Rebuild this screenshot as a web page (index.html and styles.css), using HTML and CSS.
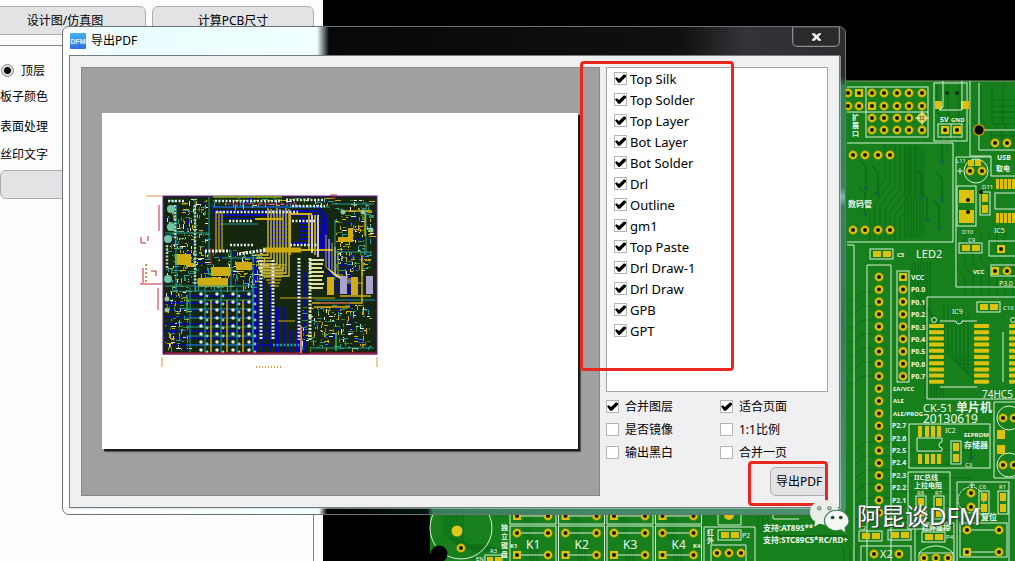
FILE: index.html
```html
<!DOCTYPE html>
<html lang="zh-CN">
<head>
<meta charset="utf-8">
<title>导出PDF</title>
<link rel="stylesheet" href="styles.css">
</head>
<body>
<main class="app">
  <aside class="sidebar">
    <div class="tabs">
      <button class="btn tab tab-first" type="button">设计图/仿真图</button>
      <button class="btn tab" type="button">计算PCB尺寸</button>
    </div>
    <div class="panel">
      <label class="side-row radio-row"><input type="radio" class="radio" name="side" checked>顶层</label>
      <div class="side-row">板子颜色</div>
      <div class="side-row surface">表面处理</div>
      <div class="side-row">丝印文字</div>
      <button class="btn wide" type="button" aria-label="丝印文字"></button>
    </div>
  </aside>
  <section class="viewer">
    <svg class="board" id="board" viewBox="323 0 692 561" preserveAspectRatio="xMinYMin slice" role="img" aria-label="PCB"></svg>
  </section>
</main>

<section class="dialog" role="dialog" aria-labelledby="dialog-title">
  <header class="titlebar">
    <svg class="logo" viewBox="0 0 16 16" aria-hidden="true">
      <defs><linearGradient id="lg" x2="0" y2="1"><stop stop-color="#43b3ef"/><stop offset="1" stop-color="#2f6fe4"/></linearGradient></defs>
      <rect width="16" height="16" rx="1" fill="url(#lg)"/>
      <text x="8" y="11" text-anchor="middle" class="logo-text">DFM</text>
    </svg>
    <h1 class="title" id="dialog-title">导出PDF</h1>
    <button class="close" type="button" aria-label="关闭"><svg viewBox="0 0 12 10" class="close-icon"><path d="M1 1h3l2 2.2L8 1h3v1L8 5l3 3v1H8L6 6.8 4 9H1V8l3-3-3-3z"/></svg></button>
  </header>
  <div class="content">
    <div class="preview">
      <div class="page">
        <svg class="drawing" id="drawing" viewBox="135 180 260 200" role="img" aria-label="PDF"></svg>
      </div>
    </div>
    <form class="options">
      <div class="layers">
        <label class="layer"><input type="checkbox" class="check" checked>Top Silk</label>
        <label class="layer"><input type="checkbox" class="check" checked>Top Solder</label>
        <label class="layer"><input type="checkbox" class="check" checked>Top Layer</label>
        <label class="layer"><input type="checkbox" class="check" checked>Bot Layer</label>
        <label class="layer"><input type="checkbox" class="check" checked>Bot Solder</label>
        <label class="layer"><input type="checkbox" class="check" checked>Drl</label>
        <label class="layer"><input type="checkbox" class="check" checked>Outline</label>
        <label class="layer"><input type="checkbox" class="check" checked>gm1</label>
        <label class="layer"><input type="checkbox" class="check" checked>Top Paste</label>
        <label class="layer"><input type="checkbox" class="check" checked>Drl Draw-1</label>
        <label class="layer"><input type="checkbox" class="check" checked>Drl Draw</label>
        <label class="layer"><input type="checkbox" class="check" checked>GPB</label>
        <label class="layer"><input type="checkbox" class="check" checked>GPT</label>
      </div>
      <div class="settings">
        <label class="setting"><input type="checkbox" class="check" checked>合并图层</label>
        <label class="setting"><input type="checkbox" class="check" checked>适合页面</label>
        <label class="setting"><input type="checkbox" class="check">是否镜像</label>
        <label class="setting"><input type="checkbox" class="check">1:1比例</label>
        <label class="setting"><input type="checkbox" class="check">输出黑白</label>
        <label class="setting"><input type="checkbox" class="check">合并一页</label>
      </div>
      <button class="btn export" type="button">导出PDF</button>
    </form>
  </div>
  <div class="mark mark-layers"></div>
  <div class="mark mark-export"></div>
</section>

<div class="watermark">
  <svg class="bubbles" viewBox="0 0 40 34" aria-hidden="true">
    <path d="M15 1C7 1 1 6 1 13c0 4 2 7 5 9l-1 5 5-3 5 1c8 0 14-5 14-12S23 1 15 1z" fill="#e9eeea"/>
    <circle cx="10" cy="9" r="1.6" fill="#d5eadb" stroke="#5c7567"/><circle cx="20" cy="9" r="1.6" fill="#d5eadb" stroke="#5c7567"/>
    <path d="M27 11c-7 0-12 5-12 10s5 10 12 10l4-1 5 3-1-5c3-2 4-4 4-7 0-5-5-10-12-10z" fill="#f6f8f6" stroke="#3c7c4c"/>
    <circle cx="23" cy="18" r="1.8" fill="#234f2d"/><circle cx="31" cy="18" r="1.8" fill="#234f2d"/>
  </svg>
  <span>阿昆谈DFM</span>
</div>
<script src="script.js"></script>
</body>
</html>
```
FILE: styles.css
```css
* { box-sizing: border-box; }

body {
  margin: 0;
  min-height: 100vh;
  overflow: hidden;
  font-family: "Noto Sans", "Noto Sans CJK SC", sans-serif;
  font-size: 12px;
  line-height: 16px;
  color: #000;
  background: #000;
}

button, input { font: inherit; color: inherit; }

.app { display: flex; height: 100vh; }

.sidebar {
  flex: 0 0 323px;
  display: flex;
  flex-direction: column;
  padding-top: 6px;
  background: #fdfdfe;
  overflow: hidden;
}

.tabs { display: flex; gap: 6px; margin: 0 9px 10px -16px; }

.btn {
  height: 29px;
  padding: 0;
  border: 1px solid #adadaf;
  border-radius: 6px;
  background: #e3e3e5;
}

.tab { flex: 1; }

.panel {
  flex: 1;
  display: flex;
  flex-direction: column;
  margin-right: 9px;
  padding-top: 12px;
  border: 1px solid #808488;
  border-width: 1px 1px 0 0;
}

.side-row { height: 27px; line-height: 28px; }
.surface { height: 31px; line-height: 34px; }
.radio-row { display: flex; align-items: center; gap: 7px; height: 25px; }
.side-row:nth-child(4) { height: 29px; line-height: 28px; }

.radio {
  appearance: none;
  width: 13px;
  height: 13px;
  margin: 0 0 0 1px;
  border: 1px solid #85858a;
  border-radius: 50%;
  background: radial-gradient(circle, #000 3px, #e0e0e2 4px);
}

.wide { width: 290px; }

.viewer { flex: 1; min-width: 0; background: #000; }
.board { display: block; width: 100%; height: 100%; }
.board text { font-family: "Noto Sans", "Noto Sans CJK SC", sans-serif; fill: #eef8ee; }

.dialog {
  position: absolute;
  left: 62px;
  right: 169px;
  top: 26px;
  padding: 0 5px 6px 6px;
  border: 1px solid #6c7378;
  border-radius: 7px;
  background:
    linear-gradient(to right, #fff 0, #f3ffff 256px, #000 264px, #06140d 364px, #397e5b 370px, #4b9573 100%) bottom / 100% 7px no-repeat,
    linear-gradient(to bottom, #303033 0, #2b2b2e 50px, #36815a 60px, #3b805e 160px, #7fb7b2 170px, #3b8060 180px, #39785a 300px, #4b9573 100%) right / 7px 100% no-repeat,
    linear-gradient(to right, #fff 0, #e9feff 60px, #f1ffff 254px, #08080a 266px, #101012 620px, #343438 680px, #2d2d30 100%);
}

.titlebar { display: flex; align-items: center; gap: 5px; height: 28px; padding-left: 1px; }
.logo { width: 16px; height: 16px; }
.logo-text { font: bold 7px "Liberation Sans", sans-serif; fill: #e6f5ff; }
.title { flex: 1; margin: 0; font-size: 12px; font-weight: 400; }

.close {
  align-self: flex-start;
  display: grid;
  place-items: center;
  width: 48px;
  height: 20px;
  padding: 0;
  border: 1px solid #8a8a8e;
  border-top: 0;
  border-radius: 0 0 5px 5px;
  background: #2a2a2d;
  box-shadow: inset 0 0 0 1px #47474b;
}

.close-icon { width: 11px; height: 10px; fill: #f5f5f5; }

.content {
  display: grid;
  grid-template-columns: 1fr 222px;
  gap: 6px;
  padding: 11px;
  border: 1px solid #777a7e;
  background: #f0f0f2;
  box-shadow: 1px 1px 0 rgba(190, 215, 205, 0.6);
}

.preview {
  display: flex;
  padding: 45px 21px 46px 20px;
  border: 1px solid #88878c;
  background: #a09fa2;
}

.page {
  flex: 1;
  padding: 67px 33px;
  background: #fff;
  box-shadow: 2px 2px 0 #1c1a1c, 3px 3px 1px #5a585b;
}

.drawing { display: block; width: 260px; height: 200px; }

.options { display: flex; flex-direction: column; }

.layers {
  min-height: 325px;
  padding: 0 7px;
  border: 1px solid #a4a4a8;
  background: #fff;
  font-size: 13px;
}

.layer { display: flex; align-items: center; gap: 3px; height: 21px; }

.settings {
  display: grid;
  grid-template-columns: 114px 1fr;
  grid-auto-rows: 23px;
  padding: 3px 0;
}

.setting { display: flex; align-items: center; gap: 6px; }

.check {
  appearance: none;
  flex: none;
  width: 13px;
  height: 13px;
  margin: 0;
  border: 1px solid #b4b4b6;
  background: #fff;
}

.check:checked::before {
  content: "";
  display: block;
  width: 11px;
  height: 11px;
  background: #000;
  clip-path: polygon(0 48%, 16% 38%, 36% 54%, 82% 12%, 100% 20%, 100% 34%, 46% 88%, 28% 88%);
}

.export { align-self: flex-end; width: 58px; }

.mark { position: absolute; border: 3px solid #e8281e; border-radius: 4px; pointer-events: none; }
.mark-layers { top: 34px; right: 111px; width: 154px; height: 310px; }
.mark-export { top: 434px; right: 17px; width: 80px; height: 45px; }

.watermark {
  position: absolute;
  left: 809px;
  top: 498px;
  display: flex;
  align-items: center;
  gap: 7px;
  font-size: 24px;
  line-height: 36px;
  color: #fff;
  text-shadow: 1px 1px 1px #333, -1px 0 1px #456;
  white-space: nowrap;
}

.bubbles { width: 41px; height: 35px; }
```
FILE: script.js
```js
const NS = 'http://www.w3.org/2000/svg';

function pen(svg) {
  const add = (tag, attrs, text) => {
    const el = document.createElementNS(NS, tag);
    for (const key in attrs) el.setAttribute(key, attrs[key]);
    if (text) el.textContent = text;
    svg.appendChild(el);
  };
  return {
    add,
    path: (d, stroke, width = 1, extra = {}) => add('path', { d, stroke, 'stroke-width': width, fill: 'none', ...extra }),
    rect: (x, y, width, height, fill, extra = {}) => add('rect', { x, y, width, height, fill, ...extra }),
    circle: (cx, cy, r, fill, extra = {}) => add('circle', { cx, cy, r, fill, ...extra })
  };
}

function drawBoard() {
  const p = pen(document.getElementById('board'));
  const W = '#d9f0d9', Y = '#dcc20e', T = '#0b6a14';
  const box = (x, y, x2, y2) => p.rect(x, y, x2 - x, y2 - y, 'none', { stroke: W });
  const line = d => p.path(d, W);
  const pad = (x, y, square) => {
    if (square) p.rect(x - 4, y - 4, 8, 8, Y);
    else p.circle(x, y, 4.3, Y, { stroke: '#a58f10', 'stroke-width': .6 });
    p.circle(x, y, 2, '#101505');
  };
  const smd = (x, y, w, h) => p.rect(x, y, w, h, Y);
  const text = (x, y, s, size = 7, bold) => p.add('text', { x, y, 'font-size': size, 'font-weight': bold ? 700 : 400 }, s);
  const cap = (x, y) => { box(x, y, x + 23, y + 10); smd(x + 3, y + 2, 8, 6); smd(x + 13, y + 2, 8, 6); };
  const vcap = (x, y) => { box(x, y, x + 10, y + 23); smd(x + 2, y + 2, 6, 8); smd(x + 2, y + 13, 6, 8); };

  p.rect(430, 81, 600, 480, '#17801c');
  p.path('M430 81H1015', '#7f9b70');

  // copper traces
  for (let i = 0; i < 7; i++) {
    p.path(`M${885 + i * 5} 144V${180 + i * 3}L${870 + i * 5} ${200 + i * 3}V240`, T);
    p.path(`M${905 + i * 3} 146V238`, T);
    p.path(`M${848} ${300 + i * 14}h6l8 -8h12`, T);
    p.path(`M${912 + i * 3} 262V${290 + i * 4}L${925 + i * 3} ${305 + i * 4}V400`, T);
    p.path(`M${944 + i * 4} ${303 + i * 2}V${350 + i * 4}l10 10H975`, T);
    p.path(`M856 ${450 + i * 14}l10 -8h26l10 8h70`, T);
    p.path(`M${445 + i * 3} 515V${535 + i}l12 10h30`, T);
    p.path(`M${937 + i * 11} 85V${112 + i * 2}l10 10V150`, T);
    p.path(`M993 ${100 + i * 6}h25`, T);
    p.path(`M${957 + i * 8} 232V${270 - i * 3}l8 8V296`, T);
  }
  for (let i = 0; i < 4; i++) {
    for (let j = 0; j < 3; j++) p.path(`M${525 + i * 48 + j * 3} 516v20l6 8v17`, T);
    p.path(`M${758 + i * 5} 516v12l8 8h70l${8 + i} 12v20`, T);
  }
  [[922, 198], [942, 162], [942, 200], [866, 188], [878, 194], [927, 220], [865, 215], [971, 458], [939, 228]].forEach(([x, y]) => {
    p.path(`M${x} ${y}v-22l-6 -6`, T, 1.5); p.circle(x, y, 2.3, '#126840');
  });

  // expansion header
  [93, 106, 118, 130].forEach((y, r) => {
    [848, 859, 872, 884, 897, 909, 922].forEach((x, c) => {
      if (c > 1 || r < 2) pad(x, y, (r === 0 && c === 1) || (r === 1 && c === 2));
    });
  });
  line('M847 87H866M847 112H928'); box(866, 87, 928, 137);
  ['扩', '展', '口'].forEach((s, i) => text(852, 120 + i * 8, s, 7, 1));
  p.circle(922, 118, 4.5, 'none', { stroke: '#ffeebb' });
  p.path('M915 118h14M922 111v14', '#ffeebb');
  box(934, 83, 967, 141);
  smd(935, 101, 7, 8); smd(961, 101, 8, 8);
  line('M943 81V107l-4 3h23V107V81');
  p.circle(947, 93, 2, '#142a0b'); p.circle(957, 93, 2, '#142a0b');
  text(940, 122, '5V', 7, 1); text(951, 122, 'GND', 6, 1);
  box(938, 124, 962, 137); pad(945, 130, 1); pad(957, 130, 1); line('M951 124v13');
  line('M970 81V156H991V176H1015M979 83V150H1015M984 130H1015');
  p.circle(979, 130, 6, '#b8960c'); p.circle(979, 130, 4.5, '#050505');
  pad(995, 143); pad(1007, 143);
  text(997, 160, 'USB', 7, 1); text(996, 171, '取电', 7, 1);

  // digital tube
  line('M847 143H953V242H847');
  [853, 865, 878, 890].forEach(x => { pad(x, 155); pad(x, 230); });
  text(848, 207, '数码管', 8, 1);

  line('M991 157H956V287H1015');
  p.circle(976, 171, 12, 'none', { stroke: W });
  smd(968, 160, 6, 6); smd(975, 160, 6, 6); pad(970, 171); pad(982, 171);
  line('M957 171h6M960 168v6');
  text(956, 163, 'L11', 6);
  box(957, 186, 976, 226); smd(959, 190, 15, 13); smd(959, 210, 15, 13);
  p.circle(968, 200, 2, '#111'); p.circle(968, 212, 2, '#111');
  vcap(980, 192); p.circle(981, 192, 2, '#111');
  text(982, 189, 'D11', 6); text(962, 234, 'D10', 6); text(968, 242, 'C9', 6);
  for (let i = 0; i < 6; i++) { smd(996 + i * 4, 179, 3, 10); smd(996 + i * 4, 213, 3, 10); }
  box(995, 193, 1020, 209); text(994, 233, 'IC5', 7);
  cap(959, 243); box(989, 241, 1020, 256); pad(1001, 249, 1);
  text(973, 274, 'VCC', 6, 1); box(991, 265, 1020, 276); pad(995, 271, 1); pad(1007, 271);
  text(999, 286, 'P3.0', 7);

  // microcontroller socket
  line('M847 245H854V561M867 561V265H891V561');
  for (let i = 0; i < 20; i++) pad(879, 277 + i * 12.4);
  cap(870, 249); text(897, 257, 'C5', 6, 1); text(916, 258, 'LED2', 11);
  box(897, 271, 909, 382);
  ['VCC', 'P0.0', 'P0.1', 'P0.2', 'P0.3', 'P0.4', 'P0.5', 'P0.6', 'P0.7'].forEach((s, i) => {
    pad(903, 277 + i * 12.4, !i); text(911, 280 + i * 12.4, s, 7, 1);
  });
  ['EA/VCC', 'ALE', 'ALE/PROG', 'P2.7', 'P2.6', 'P2.5', 'P2.4', 'P2.3', 'P2.2', 'P2.1'].forEach((s, i) =>
    text(i < 3 ? 893 : 892, 391 + i * 12.4, s, i < 3 ? 6 : 7, 1));

  // latch
  line('M1015 297H927V399H1015'); text(952, 314, 'IC9', 7); cap(977, 302); text(1003, 310, 'C10', 6);
  for (let i = 0; i < 10; i++) [929, 974, 1009].forEach(x => p.rect(x, 324 + i * 6.2, 15, 4, Y, { rx: 1 }));
  p.circle(934, 320, 2.5, 'none', { stroke: W }); p.circle(1013, 320, 2.5, 'none', { stroke: W });
  line('M940 321h16a3 3 0 0 0 6 0h15M940 387h37M1003 332v50');
  text(982, 398, '74HC5', 10); text(923, 412, 'CK-51', 11); text(956, 412, '单片机', 12, 1); text(923, 423, '20130619', 12);

  // eeprom
  box(909, 424, 990, 468);
  [918, 925, 931, 937].forEach(x => { smd(x, 426, 4, 11); smd(x, 454, 4, 10); });
  line('M942 438H917V451H942V448a3 3 0 0 1 0-6z');
  text(945, 433, 'IC2', 7); text(964, 437, 'EEPROM', 6, 1); text(964, 448, '存储器', 8, 1); text(965, 467, 'C3', 6);
  vcap(951, 441);
  line('M1015 402H994V478H1015');
  [418, 465].forEach(y => { p.circle(1009, y, 12, 'none', { stroke: W }); pad(1003, y); pad(1014, y); });
  smd(997, 430, 8, 9); smd(997, 445, 8, 9);
  box(908, 472, 950, 529); text(914, 480, 'IIC总线', 7, 1); text(914, 488, '上拉电阻', 7, 1);
  text(917, 495, 'R8', 6); text(935, 495, 'R7', 6); vcap(916, 496); vcap(934, 496);

  // reset
  line('M1009 561V482H957V561');
  p.circle(971, 500, 13, 'none', { stroke: W, 'stroke-dasharray': '3 1' });
  pad(971, 493); pad(971, 507); vcap(979, 491); vcap(998, 491);
  line('M969 485h6M972 482v6'); text(979, 489, 'C6', 6); text(999, 489, 'R1', 6); text(981, 520, '复位', 8, 1);
  box(960, 523, 1007, 557); line('M967 530h32M967 552h32');
  pad(967, 530); pad(999, 530); pad(967, 552, 1); pad(999, 552);
  cap(859, 531); cap(888, 530); text(859, 530, 'C2', 6);
  box(861, 546, 911, 566); pad(874, 554); pad(899, 554); text(880, 558, 'X2', 11);
  line('M915 561V523H954V561M919 561V553H953V561M919 553a20 15 0 0 1 34 0');
  cap(922, 532); text(946, 539, 'P4', 6); text(922, 530, '红外遥控', 7, 1);
  pad(924, 558); pad(936, 558); pad(948, 558);

  // keypad
  p.circle(461, 528, 31, 'none', { stroke: W });
  p.circle(457, 531, 5.5, '#e0c720'); pad(461, 548); p.circle(439, 554, 8.5, '#000'); p.rect(430, 554, 9, 10, '#000');
  text(490, 553, 'R3', 6); text(476, 561, 'EN', 6); smd(487, 557, 6, 6); smd(495, 557, 6, 6); box(485, 555, 502, 566);
  ['独', '立', '键', '盘'].forEach((s, i) => text(501, 530 + i * 9, s, 7, 1));
  for (let i = 0; i < 4; i++) {
    const x = 510 + i * 48.5;
    box(x, 500, x + 46, 524); box(x, 526, x + 46, 570);
    [516, 533, 555].forEach((y, r) => {
      line(`M${x + 7} ${y}h31`); pad(x + 7, y, r !== 1); pad(x + 38, y);
    });
    text(x + 16, 549, 'K' + (i + 1), 12);
  }
  text(693, 548, 'K4', 6, 1); text(510, 548, 'K1', 6, 1);
  line('M704 561V527H755V561M718 500V525H741V500M799 519H773V500');
  p.circle(729, 515, 5, Y); cap(718, 530); text(742, 538, 'P2', 7);
  text(707, 535, '红', 7, 1); text(707, 543, '外', 7, 1);
  line('M711 561V545H746V561'); [717, 729, 741].forEach(x => pad(x, 553));
  text(763, 531, '支持:AT89S**', 8, 1); text(763, 543, '支持:STC89C5*RC/RD+', 8, 1);
}

function drawPreview() {
  const p = pen(document.getElementById('drawing'));
  const Y = '#d0ac10', B = '#0808b0', C = '#239c97', W = '#dce8dc', G = '#15270f';
  let seed = 7;
  const rnd = n => (seed = (seed * 16807) % 2147483647) % n;
  const dots = (d, colour = W, width = 2.5, dash = '2 1.5') => p.path(d, colour, width, { 'stroke-dasharray': dash });

  p.rect(163, 196, 214, 158, G);
  for (let i = 0; i < 10; i++) {
    p.path(`M${211 + i} ${207 + i * 4}H${318 - i}l8 8V${246 + i}`, B, 2);
    p.path(`M${322 + i} ${225 + i * 2}v${24 + i * 2}l8 8h${20 - i}v40`, B, 1);
  }
  p.rect(222, 219, 46, 27, G);
  p.rect(285, 216, 14, 26, G);
  for (let i = 0; i < 8; i++) {
    p.path(`M${256 + i * 7} ${258 + i * 2}V352`, B, i % 3 ? 2 : 4);
    p.path(`M165 ${296 + i * 7}H${255 + i * 4}`, B, 1.5);
  }
  p.rect(290, 255, 7, 75, G); p.rect(276, 262, 10, 45, G);

  // scattered copper and silkscreen
  const scatter = (x, y, w, h, count) => {
    const colours = [Y, Y, C, C, W, B, G, G, G, '#348a28'];
    for (let i = 0; i < count; i++) {
      const wide = rnd(2);
      p.rect(x + rnd(w), y + rnd(h), wide ? 2 + rnd(5) : 1, wide ? 1 : 2 + rnd(4), colours[rnd(colours.length)]);
    }
  };
  scatter(167, 198, 40, 90, 420);
  scatter(165, 290, 24, 60, 150);
  scatter(335, 200, 36, 75, 300);
  scatter(300, 305, 70, 44, 300);
  scatter(205, 250, 60, 38, 240);
  scatter(210, 198, 120, 8, 110);
  p.rect(175, 254, 16, 11, Y); p.rect(198, 278, 30, 9, Y); p.rect(211, 267, 20, 9, Y); p.rect(236, 262, 16, 8, Y);
  p.rect(338, 237, 12, 5, Y); p.rect(348, 228, 5, 14, Y); p.rect(186, 263, 10, 4, Y);

  // cyan silkscreen grid
  for (let i = 0; i < 7; i++) p.path(`M186 ${291 + i * 9}H252`, C);
  [190, 205, 221, 237, 253].forEach(x => p.path(`M${x} 288V352`, C));
  [[176, 205, 290], [195, 198, 290], [209, 197, 260], [231, 250, 290], [253, 250, 350], [335, 220, 280], [366, 202, 255]].forEach(([x, a, b]) => p.path(`M${x} ${a}V${b}`, C));
  p.path('M165 233H209M165 286H255M213 207H330M331 204H374M335 252H372M315 300H375M313 348H374M220 224H258M222 258H262', C);
  for (let i = 0; i < 4; i++) for (let j = 0; j < 8; j++) {
    p.circle(201 + i * 16, 294 + j * 8, 1.8, W); p.circle(207 + i * 16, 296 + j * 8, 1.4, '#9ac9ae');
  }

  // yellow buses
  for (let i = 0; i < 3; i++) {
    p.path(`M${216 + i * 3} 211V252`, Y, 1.2);
    p.path(`M${211 + i * 16} 300V352`, Y, 1.5);
  }
  for (let i = 0; i < 8; i++) {
    p.path(`M${268 + i * 3} ${208 + i % 3}V${255 + i * 3}H${255 + i}`, '#d6c744', 1.3);
    p.path(`M${256 + i * 2} ${265 + i * 3}H${286 - i}`, Y, 1.2);
    p.path(`M309 ${260 + i * 4}H${324 - i % 3}`, '#e4df92', 2);
  }
  p.path('M263 250H301', Y, 5);
  p.path('M301 250H333M290 255V214H312M255 219H283', Y, 2);
  for (let i = 0; i < 4; i++) p.path(`M${309 + i * 3} 215V${251 + i * 2}`, i % 2 ? '#e9e4b0' : Y, 1.8);
  for (let i = 0; i < 5; i++) p.path(`M${326 + i * 3} ${235 + i * 4}v${32 - i * 2}l8 8H${343 + i * 5}`, i % 2 ? W : Y, 1);
  [[327, 277], [340, 276], [351, 277], [366, 276]].forEach(([x, y], i) => p.rect(x, y, 7, 18, i % 2 ? '#aaa4cc' : Y));
  p.path('M312 303H362V255M340 296H371M314 307H350M345 211H372M365 214v22', Y, 1.5);
  p.path('M280 298H335M278 321H295', Y);

  // pin rows
  dots('M215 201H280M216 212H298M286 200H325M292 206H325');
  dots('M229 221H253M292 221H316M230 245H253M290 245H318M168 201H185');
  dots('M261 260V340M273 260V340M299 258V340M310 258V340', W, 3);
  dots('M167 245V270M195 205V285M175 205V240', '#b2d8b2');
  dots('M239 254L265 250M205 251H230', '#fff', 3);
  dots('M273 345H300', C);
  p.path('M211 248V265M165 353H302M310 353H376', '#c01b32');
  p.path('M301 326V353', '#e37a72', 2);
  p.path('M227 204H297M320 303H350', '#9f276a');
  p.path('M187 295v18M336 333v18', '#2fbc46', 1.5);
  [[171, 209], [171, 227], [168, 239], [168, 279]].forEach(([x, y]) => p.circle(x, y, 4, '#72c4a6'));
  [[167, 299], [167, 310], [343, 212], [363, 212], [371, 230]].forEach(([x, y]) => p.circle(x, y, 2.5, '#8fc9a8'));

  p.rect(163, 196, 214, 158, 'none', { stroke: '#6f1d9c' });
  p.path('M213 197H282', '#86b817', 1.5);
  p.path('M163 354H377', '#a11d48');
  p.path('M146 196H162M162 357v10M377 357v10', '#dd9840');
  dots('M256 367H281', '#d99c40', 2, '1 2');
  p.path('M159 205v26M158 288v22M141 237v6h5M148 236v5M140 284H162M151 271h5v5M143 268v15M330 195h7M331 198h5', '#bb2936', 1);
  dots('M146 264V284', '#d99040', 2, '2 2');
}

drawBoard();
drawPreview();
```
